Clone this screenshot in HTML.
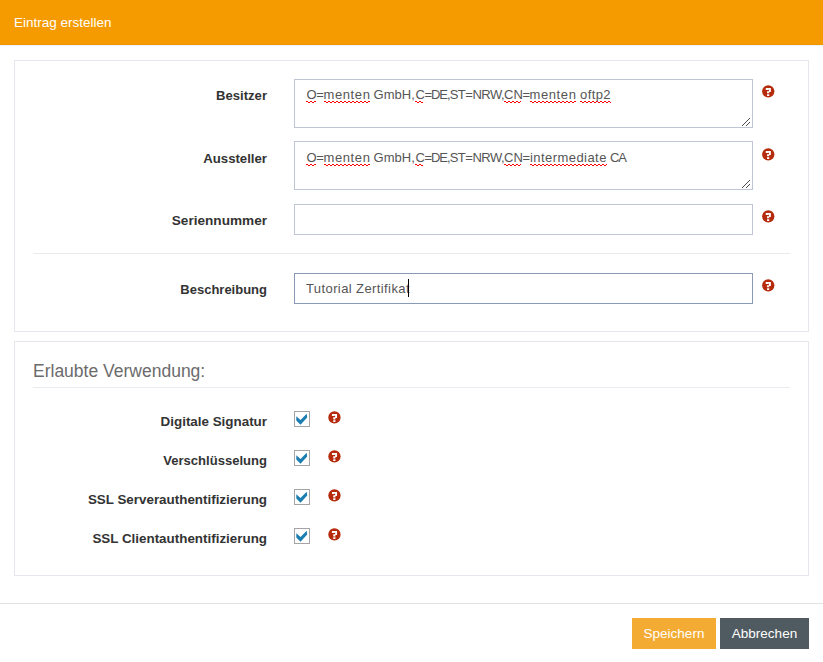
<!DOCTYPE html>
<html><head><meta charset="utf-8"><style>
*{box-sizing:border-box;margin:0;padding:0}
html,body{width:823px;height:662px;overflow:hidden;background:#fff}
body{font-family:"Liberation Sans",sans-serif;font-size:13px;color:#333;position:relative}
.abs{position:absolute}
.hdr{left:0;top:0;width:823px;height:45px;background:#F59B00;border-bottom:1px solid #F29400}
.hdr span{position:absolute;left:14px;top:15px;line-height:16px;color:#fff;font-size:13.5px}
.panel{position:absolute;left:14px;width:795px;border:1px solid #E4E8EE;background:#fff}
.lbl{position:absolute;right:556px;font-weight:bold;color:#333;line-height:16px;font-size:13.4px;white-space:nowrap;text-align:right}
.fld{position:absolute;left:294px;width:459px;border:1px solid #BEC6D6;background:#fff;color:#555;white-space:nowrap}
.fld .t{position:absolute;left:12px;line-height:16px}
.sq{position:relative}.sq::after{content:"";position:absolute;left:0;right:0;top:14px;height:2px;background:repeating-linear-gradient(90deg,#f00 0 2px,transparent 2px 4px) 0 0/100% 1px no-repeat,repeating-linear-gradient(90deg,transparent 0 2px,#f00 2px 4px) 0 1px/100% 1px no-repeat}
.help{position:absolute}
.seg{position:absolute;line-height:16px;color:#555;white-space:nowrap}
.sqd{position:absolute;height:2px;background:repeating-linear-gradient(90deg,#f00 0 2px,transparent 2px 4px) 0 0/100% 1px no-repeat,repeating-linear-gradient(90deg,transparent 0 2px,#f00 2px 4px) 0 1px/100% 1px no-repeat}
.line{position:absolute;left:33px;width:757px;height:1px;background:#E8EBEF}
.cb{position:absolute;left:294px;width:16px;height:16px;border:1px solid #A4A4A4;background:#fff}
.btn{position:absolute;top:618px;height:31px;color:#fff;line-height:31px;text-align:center;font-size:13.5px}
</style></head><body>
<div class="abs hdr"><span>Eintrag erstellen</span></div>
<div class="abs" style="left:0;top:45px;width:823px;height:1px;background:#EEF4FA"></div>
<div class="panel" style="top:60px;height:272px"></div>
<div class="lbl" style="top:88px;font-size:13.1px">Besitzer</div>
<div class="fld" style="top:79px;height:49px"></div>
<span class="seg" style="left:306.50px;top:87px">O</span><div class="sqd" style="left:306px;top:101px;width:10px"></div><span class="seg" style="left:316.20px;top:87px">=</span><span class="seg" style="left:323.50px;top:87px;letter-spacing:0.6px">menten</span><div class="sqd" style="left:324px;top:101px;width:46px"></div><span class="seg" style="left:373.60px;top:87px">GmbH,</span><span class="seg" style="left:415.50px;top:87px">C</span><div class="sqd" style="left:415px;top:101px;width:8px"></div><span class="seg" style="left:424.40px;top:87px;letter-spacing:-1.0px">=DE,</span><span class="seg" style="left:449.70px;top:87px;letter-spacing:-0.5px">ST=NRW,</span><span class="seg" style="left:504.00px;top:87px">CN</span><div class="sqd" style="left:504px;top:101px;width:17px"></div><span class="seg" style="left:522.60px;top:87px">=</span><span class="seg" style="left:529.50px;top:87px;letter-spacing:0.6px">menten</span><div class="sqd" style="left:530px;top:101px;width:46px"></div><span class="seg" style="left:580.00px;top:87px;letter-spacing:0.4px">oftp2</span><div class="sqd" style="left:580px;top:101px;width:31px"></div>
<svg class="abs" style="left:742px;top:116px" width="10" height="10" viewBox="0 0 10 10" shape-rendering="crispEdges" fill="#4a4a4a"><rect x="0" y="9" width="1" height="1"/><rect x="1" y="8" width="1" height="1"/><rect x="2" y="7" width="1" height="1"/><rect x="3" y="6" width="1" height="1"/><rect x="4" y="5" width="1" height="1"/><rect x="5" y="4" width="1" height="1"/><rect x="6" y="3" width="1" height="1"/><rect x="7" y="2" width="1" height="1"/><rect x="4" y="9" width="1" height="1"/><rect x="5" y="8" width="1" height="1"/><rect x="6" y="7" width="1" height="1"/><rect x="7" y="6" width="1" height="1"/></svg>
<div class="lbl" style="top:151px;font-size:13.2px">Aussteller</div>
<div class="fld" style="top:141px;height:49px"></div>
<span class="seg" style="left:306.50px;top:150px">O</span><div class="sqd" style="left:306px;top:164px;width:10px"></div><span class="seg" style="left:316.20px;top:150px">=</span><span class="seg" style="left:323.50px;top:150px;letter-spacing:0.6px">menten</span><div class="sqd" style="left:324px;top:164px;width:46px"></div><span class="seg" style="left:373.60px;top:150px">GmbH,</span><span class="seg" style="left:415.50px;top:150px">C</span><div class="sqd" style="left:415px;top:164px;width:8px"></div><span class="seg" style="left:424.40px;top:150px;letter-spacing:-1.0px">=DE,</span><span class="seg" style="left:449.70px;top:150px;letter-spacing:-0.5px">ST=NRW,</span><span class="seg" style="left:504.00px;top:150px">CN</span><div class="sqd" style="left:504px;top:164px;width:17px"></div><span class="seg" style="left:522.60px;top:150px">=</span><span class="seg" style="left:529.90px;top:150px;letter-spacing:0.45px">intermediate</span><div class="sqd" style="left:530px;top:164px;width:77px"></div><span class="seg" style="left:610.10px;top:150px;letter-spacing:-1.2px">CA</span>
<svg class="abs" style="left:742px;top:178px" width="10" height="10" viewBox="0 0 10 10" shape-rendering="crispEdges" fill="#4a4a4a"><rect x="0" y="9" width="1" height="1"/><rect x="1" y="8" width="1" height="1"/><rect x="2" y="7" width="1" height="1"/><rect x="3" y="6" width="1" height="1"/><rect x="4" y="5" width="1" height="1"/><rect x="5" y="4" width="1" height="1"/><rect x="6" y="3" width="1" height="1"/><rect x="7" y="2" width="1" height="1"/><rect x="4" y="9" width="1" height="1"/><rect x="5" y="8" width="1" height="1"/><rect x="6" y="7" width="1" height="1"/><rect x="7" y="6" width="1" height="1"/></svg>
<div class="lbl" style="top:213px;font-size:13.6px">Seriennummer</div>
<div class="fld" style="top:204px;height:31px"></div>
<div class="line" style="top:253px;background:#EBEBEB"></div>
<div class="lbl" style="top:282px;font-size:13px">Beschreibung</div>
<div class="fld" style="top:273px;height:31px;border-color:#8A9AB6"><span class="t" style="top:7px;left:11px;letter-spacing:0.4px">Tutorial Zertifikat</span><span class="abs" style="left:113px;top:5px;width:1px;height:18px;background:#000"></span></div>
<svg class="help" style="left:760px;top:83px;width:16px;height:16px" viewBox="0 0 16 16"><g transform="translate(0.25 0.35)"><circle cx="8" cy="8" r="6.15" fill="#B52B0C"/><path fill="#fff" d="M5.5 4.6 H10.6 V8.6 H9 V10 H6.8 V7.9 H8.7 V6.4 H7.8 V6.7 H5.5 Z M6.8 10.9 H9 V12.6 H6.8 Z"/></g></svg>
<svg class="help" style="left:760px;top:146px;width:16px;height:16px" viewBox="0 0 16 16"><g transform="translate(0.25 0.35)"><circle cx="8" cy="8" r="6.15" fill="#B52B0C"/><path fill="#fff" d="M5.5 4.6 H10.6 V8.6 H9 V10 H6.8 V7.9 H8.7 V6.4 H7.8 V6.7 H5.5 Z M6.8 10.9 H9 V12.6 H6.8 Z"/></g></svg>
<svg class="help" style="left:760px;top:208px;width:16px;height:16px" viewBox="0 0 16 16"><g transform="translate(0.25 0.37)"><circle cx="8" cy="8" r="6.15" fill="#B52B0C"/><path fill="#fff" d="M5.5 4.6 H10.6 V8.6 H9 V10 H6.8 V7.9 H8.7 V6.4 H7.8 V6.7 H5.5 Z M6.8 10.9 H9 V12.6 H6.8 Z"/></g></svg>
<svg class="help" style="left:760px;top:277px;width:16px;height:16px" viewBox="0 0 16 16"><g transform="translate(0.25 0.35)"><circle cx="8" cy="8" r="6.15" fill="#B52B0C"/><path fill="#fff" d="M5.5 4.6 H10.6 V8.6 H9 V10 H6.8 V7.9 H8.7 V6.4 H7.8 V6.7 H5.5 Z M6.8 10.9 H9 V12.6 H6.8 Z"/></g></svg>
<div class="panel" style="top:341px;height:235px"></div>
<div class="abs" style="left:33px;top:361px;font-size:17.5px;line-height:20px;color:#6b6b6b;white-space:nowrap">Erlaubte Verwendung:</div>
<div class="line" style="top:387px"></div>
<div class="lbl" style="top:414px;font-size:13.4px">Digitale Signatur</div>
<div class="cb" style="top:411px"></div><svg class="abs" style="left:294px;top:411px" width="16" height="16" viewBox="0 0 16 16"><path d="M2.3 5.2 L6.5 9 L12.7 2.8 L13.2 6.6 L6.5 13.7 L2.3 9.5 Z" fill="#1C7DB1"/></svg>
<svg class="help" style="left:326px;top:409px;width:16px;height:16px" viewBox="0 0 16 16"><g transform="translate(0.45 0.40)"><circle cx="8" cy="8" r="6.15" fill="#B52B0C"/><path fill="#fff" d="M5.5 4.6 H10.6 V8.6 H9 V10 H6.8 V7.9 H8.7 V6.4 H7.8 V6.7 H5.5 Z M6.8 10.9 H9 V12.6 H6.8 Z"/></g></svg>
<div class="lbl" style="top:453px;font-size:13.05px">Verschlüsselung</div>
<div class="cb" style="top:450px"></div><svg class="abs" style="left:294px;top:450px" width="16" height="16" viewBox="0 0 16 16"><path d="M2.3 5.2 L6.5 9 L12.7 2.8 L13.2 6.6 L6.5 13.7 L2.3 9.5 Z" fill="#1C7DB1"/></svg>
<svg class="help" style="left:326px;top:448px;width:16px;height:16px" viewBox="0 0 16 16"><g transform="translate(0.45 0.40)"><circle cx="8" cy="8" r="6.15" fill="#B52B0C"/><path fill="#fff" d="M5.5 4.6 H10.6 V8.6 H9 V10 H6.8 V7.9 H8.7 V6.4 H7.8 V6.7 H5.5 Z M6.8 10.9 H9 V12.6 H6.8 Z"/></g></svg>
<div class="lbl" style="top:492px;font-size:13.4px">SSL Serverauthentifizierung</div>
<div class="cb" style="top:489px"></div><svg class="abs" style="left:294px;top:489px" width="16" height="16" viewBox="0 0 16 16"><path d="M2.3 5.2 L6.5 9 L12.7 2.8 L13.2 6.6 L6.5 13.7 L2.3 9.5 Z" fill="#1C7DB1"/></svg>
<svg class="help" style="left:326px;top:487px;width:16px;height:16px" viewBox="0 0 16 16"><g transform="translate(0.45 0.40)"><circle cx="8" cy="8" r="6.15" fill="#B52B0C"/><path fill="#fff" d="M5.5 4.6 H10.6 V8.6 H9 V10 H6.8 V7.9 H8.7 V6.4 H7.8 V6.7 H5.5 Z M6.8 10.9 H9 V12.6 H6.8 Z"/></g></svg>
<div class="lbl" style="top:531px;font-size:13.4px">SSL Clientauthentifizierung</div>
<div class="cb" style="top:528px"></div><svg class="abs" style="left:294px;top:528px" width="16" height="16" viewBox="0 0 16 16"><path d="M2.3 5.2 L6.5 9 L12.7 2.8 L13.2 6.6 L6.5 13.7 L2.3 9.5 Z" fill="#1C7DB1"/></svg>
<svg class="help" style="left:326px;top:526px;width:16px;height:16px" viewBox="0 0 16 16"><g transform="translate(0.45 0.40)"><circle cx="8" cy="8" r="6.15" fill="#B52B0C"/><path fill="#fff" d="M5.5 4.6 H10.6 V8.6 H9 V10 H6.8 V7.9 H8.7 V6.4 H7.8 V6.7 H5.5 Z M6.8 10.9 H9 V12.6 H6.8 Z"/></g></svg>
<div class="abs" style="left:0;top:603px;width:823px;height:1px;background:#E2E2E2"></div>
<div class="btn" style="left:632px;width:84px;background:#F4AB33">Speichern</div>
<div class="btn" style="left:720px;width:89px;background:#4F5A61">Abbrechen</div>
</body></html>
